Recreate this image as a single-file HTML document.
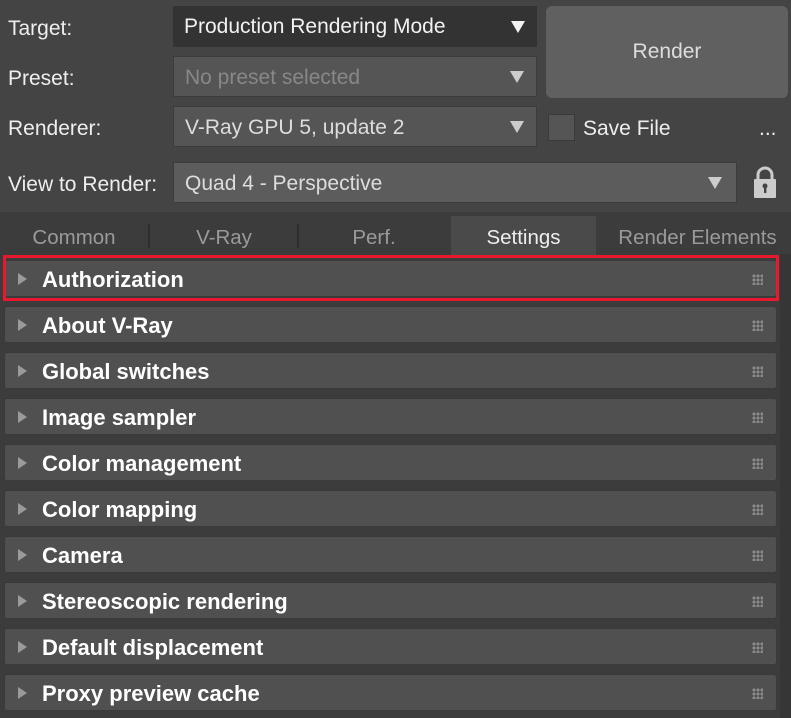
<!DOCTYPE html>
<html><head><style>
*{margin:0;padding:0;box-sizing:border-box}
body{width:791px;height:718px;background:#444;font-family:"Liberation Sans",sans-serif;position:relative;overflow:hidden;color:#e6e6e6}
.a{position:absolute}
.lbl{font-size:21px;color:#eee}
.dd{position:absolute;left:173px;width:364px;height:41px;font-size:21px;padding-left:11px;line-height:41px}
.tri{position:absolute;width:0;height:0;border-left:7px solid transparent;border-right:7px solid transparent;border-top:12px solid #ccc;top:15px}
.tab{position:absolute;top:216px;height:38px;line-height:44px;font-size:20.5px;color:#9a9a9a;text-align:center}
.ro{position:absolute;left:4px;width:773px;height:37px;background:#505050;border:1px solid #3a3a3a;border-radius:3px}
.ro .t{position:absolute;left:37px;top:0;line-height:37px;font-size:22px;font-weight:bold;color:#fff}
.ro .ar{position:absolute;left:13px;top:12px;width:0;height:0;border-top:6px solid transparent;border-bottom:6px solid transparent;border-left:9px solid #9a9a9a}
.ro .g{position:absolute;right:13px;top:13px;width:11px;height:11px;background-image:radial-gradient(#8a8a8a 55%,transparent 60%);background-size:4px 4px}
</style></head><body>
<div class="a lbl" style="left:8px;top:17px">Target:</div>
<div class="a lbl" style="left:8px;top:67px">Preset:</div>
<div class="a lbl" style="left:8px;top:117px">Renderer:</div>
<div class="a lbl" style="left:8px;top:173px">View to Render:</div>

<div class="dd" style="top:6px;background:#333;color:#f2f2f2">Production Rendering Mode<div class="tri" style="left:338px;border-top-color:#f2f2f2"></div></div>
<div class="dd" style="top:56px;background:#555;color:#888;border:1px solid #3c3c3c">No preset selected<div class="tri" style="left:336px;top:14px"></div></div>
<div class="dd" style="top:106px;background:#555;color:#ddd;border:1px solid #3c3c3c">V-Ray GPU 5, update 2<div class="tri" style="left:336px;top:14px"></div></div>
<div class="dd" style="top:162px;width:564px;background:#5c5c5c;color:#ddd;border:1px solid #3c3c3c">Quad 4 - Perspective<div class="tri" style="left:534px;top:14px"></div></div>

<div class="a" style="left:546px;top:6px;width:242px;height:92px;background:#606060;border-radius:6px;text-align:center;line-height:92px;font-size:21px;color:#ddd">Render</div>
<div class="a" style="left:548px;top:114px;width:27px;height:27px;background:#555;border:1px solid #3a3a3a"></div>
<div class="a lbl" style="left:583px;top:117px">Save File</div>
<div class="a" style="left:759px;top:117px;font-size:21px;color:#eee">...</div>
<svg class="a" style="left:750px;top:166px" width="30" height="34" viewBox="0 0 30 34"><path d="M8 13V9a7 7 0 0 1 14 0v4" fill="none" stroke="#ccc" stroke-width="3"/><rect x="4" y="13" width="22" height="19" rx="1" fill="#ccc"/><circle cx="15" cy="20" r="2.5" fill="#444"/><rect x="14" y="20" width="2.4" height="7" fill="#444"/></svg>

<div class="a" style="left:0;top:212px;width:791px;height:506px;background:#3c3c3c"></div>
<div class="a" style="left:780px;top:254px;width:11px;height:464px;background:#363636"></div>
<div class="a" style="left:451px;top:216px;width:145px;height:40px;background:#4a4a4a"></div>
<div class="a" style="left:148px;top:224px;width:2px;height:24px;background:#2e2e2e"></div>
<div class="a" style="left:297px;top:224px;width:2px;height:24px;background:#2e2e2e"></div>
<div class="tab" style="left:0;width:148px">Common</div>
<div class="tab" style="left:150px;width:148px">V-Ray</div>
<div class="tab" style="left:299px;width:150px">Perf.</div>
<div class="tab" style="left:451px;width:145px;color:#eee">Settings</div>
<div class="tab" style="left:600px;width:195px">Render Elements</div>

<div class="ro" style="top:260px"><div class="ar"></div><div class="t">Authorization</div><div class="g"></div></div>
<div class="a" style="left:3px;top:255px;width:776px;height:46px;border:3px solid #e8192c"></div>
<div class="ro" style="top:306px"><div class="ar"></div><div class="t">About V-Ray</div><div class="g"></div></div>
<div class="ro" style="top:352px"><div class="ar"></div><div class="t">Global switches</div><div class="g"></div></div>
<div class="ro" style="top:398px"><div class="ar"></div><div class="t">Image sampler</div><div class="g"></div></div>
<div class="ro" style="top:444px"><div class="ar"></div><div class="t">Color management</div><div class="g"></div></div>
<div class="ro" style="top:490px"><div class="ar"></div><div class="t">Color mapping</div><div class="g"></div></div>
<div class="ro" style="top:536px"><div class="ar"></div><div class="t">Camera</div><div class="g"></div></div>
<div class="ro" style="top:582px"><div class="ar"></div><div class="t">Stereoscopic rendering</div><div class="g"></div></div>
<div class="ro" style="top:628px"><div class="ar"></div><div class="t">Default displacement</div><div class="g"></div></div>
<div class="ro" style="top:674px"><div class="ar"></div><div class="t">Proxy preview cache</div><div class="g"></div></div>
</body></html>
